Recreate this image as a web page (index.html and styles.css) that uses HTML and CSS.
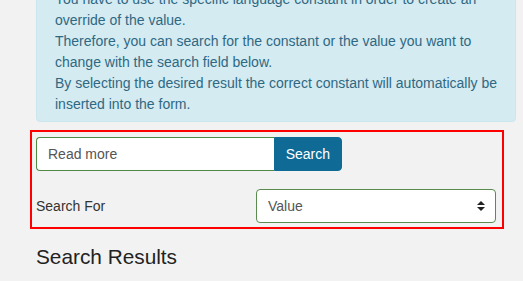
FILE: index.html
```html
<!DOCTYPE html>
<html lang="en">
<head>
    <meta charset="UTF-8">
    <meta name="viewport" content="width=device-width, initial-scale=1.0">
    <title>Language Overrides</title>
    <link rel="stylesheet" href="styles.css">
</head>
<body>
    <div class="container">
        <div class="alert-info">
            You have to use the specific language constant in order to create an override of the value.<br>
            Therefore, you can search for the constant or the value you want to change with the search field below.<br>
            By selecting the desired result the correct constant will automatically be inserted into the form.
        </div>

        <!-- Search form -->
        <div class="search-box">
            <div class="input-group">
                <input type="text" class="search-input" value="Read more">
                <button class="search-btn">Search</button>
            </div>
            <div class="form-row">
                <label class="form-label">Search For</label>
                <div class="select-wrap">
                    <select class="search-select">
                        <option>Value</option>
                        <option>Constant</option>
                    </select>
                    <svg class="select-arrow" width="8" height="10" viewBox="0 0 8 10">
                        <path d="M0 4 L4 0 L8 4 Z M0 6 L8 6 L4 10 Z" fill="#222"/>
                    </svg>
                </div>
            </div>
        </div>

        <h3 class="results-title">Search Results</h3>
    </div>
</body>
</html>
```

FILE: styles.css
```css
* {
    box-sizing: border-box;
}
body {
    font-family: "Liberation Sans", Arial, sans-serif;
    font-size: 14px;
    background-color: #f2f2f2;
    color: #333;
    margin: 0;
}
.container {
    padding-left: 36px;
}
.alert-info {
    width: 480px;
    margin-top: -20px;
    padding: 8px 15px 6px 18px;
    line-height: 21px;
    color: #2f6883;
    background-color: #d4ebf1;
    border: 1px solid #cbe6ee;
    border-radius: 4px;
}
.search-box {
    width: 474px;
    margin: 8px 0 0 -6px;
    padding: 5px 6px 4px 4px;
    border: 2px solid #ff0000;
}
.input-group {
    display: flex;
    width: 306px;
    height: 34px;
}
.search-input {
    flex: 1;
    min-width: 0;
    height: 34px;
    padding: 6px 11px;
    font-family: inherit;
    font-size: 14px;
    color: #555;
    background: white;
    border: 1px solid #4f8a45;
    border-right: none;
    border-radius: 4px 0 0 4px;
    outline: none;
}
.search-btn {
    height: 34px;
    padding: 6px 11px;
    font-family: inherit;
    font-size: 14px;
    color: white;
    background-color: #0f6a96;
    border: 1px solid #0f6a96;
    border-radius: 0 4px 4px 0;
    cursor: pointer;
}
.form-row {
    display: flex;
    align-items: center;
    margin-top: 18px;
}
.form-label {
    width: 220px;
    font-size: 14px;
    color: #333;
}
.select-wrap {
    position: relative;
    width: 240px;
}
.search-select {
    width: 100%;
    height: 34px;
    padding: 6px 11px;
    font-family: inherit;
    font-size: 14px;
    color: #555;
    background: white;
    border: 1px solid #5a8c50;
    border-radius: 4px;
    appearance: none;
    -webkit-appearance: none;
    outline: none;
}
.select-arrow {
    position: absolute;
    right: 11px;
    top: 12px;
    pointer-events: none;
}
.results-title {
    margin: 17px 0 0;
    font-size: 20.8px;
    font-weight: normal;
    line-height: 1.1;
    color: #222;
}
```
